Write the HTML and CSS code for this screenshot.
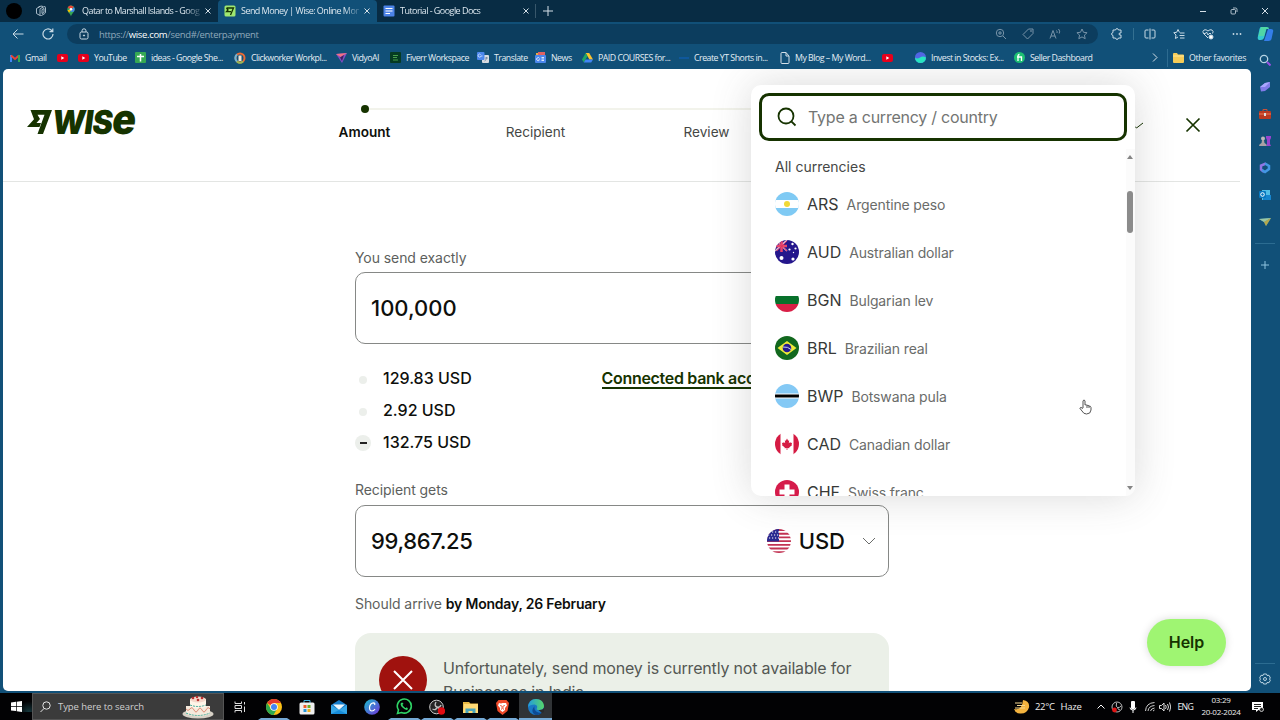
FILE: index.html
```html
<!DOCTYPE html>
<html lang="en">
<head>
  <meta charset="UTF-8">
  <meta name="viewport" content="width=device-width, initial-scale=1.0">
  <title>Send Money | Wise: Online Money Transfers</title>
  <link rel="stylesheet" href="styles.css">
</head>
<body>
  <!-- tabs -->
  <div class="tabs">
    <div class="tab tab-tools">
      <span class="avatar"></span>
      <svg class="workspaces" width="12" height="12" viewBox="0 0 12 12" fill="none" stroke="#b9cad6" stroke-width=".900"><path d="M1.500 3.500v5l3.500 2M3 2.500 5 1.200M5 4.500q0-1 1-1.300l3-1.500q1.500-.5 1.500 1v4.500q0 1-1 1.500L6.500 10.500Q5 11 5 9.700zM7 4.500v4l2-1v-4zM1.500 3.500 6 1l2 .5"/></svg>
    </div>
    <div class="tab">
      <svg width="12" height="12" viewBox="0 0 12 12"><path d="M6 .500a3.800 3.800 0 0 0-3.700 4C2.300 7 5.500 8.500 6 11.500 6.500 8.500 9.700 7 9.700 4.500A3.800 3.800 0 0 0 6 .500" fill="#34a853"/><path d="M6 .500a3.800 3.800 0 0 0-3.300 2L6 5l2.800-3.300z" fill="#ea4335"/><path d="M9 2 5 7l4-.600a4 4 0 0 0 0-4.400" fill="#4285f4"/><path d="M2.500 5 4 7.800 6 5z" fill="#fbbc04"/><circle cx="6" cy="4.300" r="1.300" fill="#fff"/></svg>
      <span class="tab-title">Qatar to Marshall Islands - Goog</span>
      <svg class="close" width="6" height="6" viewBox="0 0 6 6" stroke="#d5e0e8"><path d="M.5.5l5 5M5.500.5l-5 5"/></svg>
    </div>
    <div class="tab active">
      <svg width="12" height="12" viewBox="0 0 12 12"><rect x=".500" y=".500" width="11" height="11" rx="1.500" fill="#9fe870"/><path d="M2.500 3h7L6.500 10M2.500 3 4 5 2.500 6.700h4.500" stroke="#163300" stroke-width="1.300" fill="none"/></svg>
      <span class="tab-title">Send Money | Wise: Online Mone</span>
      <svg class="close" width="6" height="6" viewBox="0 0 6 6" stroke="#d5e0e8"><path d="M.5.5l5 5M5.500.5l-5 5"/></svg>
    </div>
    <div class="tab">
      <svg width="12" height="12" viewBox="0 0 12 12"><rect x=".500" y=".500" width="11" height="11" rx="1" fill="#4c83e8"/><path d="M2.500 3.500h7M2.500 6h7M2.500 8.500h4.500" stroke="#fff" stroke-width="1.200"/></svg>
      <span class="tab-title">Tutorial - Google Docs</span>
      <svg class="close" width="6" height="6" viewBox="0 0 6 6" stroke="#d5e0e8"><path d="M.5.5l5 5M5.500.5l-5 5"/></svg>
    </div>
    <svg class="new-tab" width="10" height="10" viewBox="0 0 10 10" stroke="#d5e0e8"><path d="M5 0v10M0 5h10"/></svg>
    <div class="window-buttons">
      <svg width="8" height="8" viewBox="0 0 8 8" stroke="#d5e0e8" fill="none"><path d="M1 4.500h6"/></svg>
      <svg width="8" height="8" viewBox="0 0 8 8" stroke="#d5e0e8" fill="none" stroke-width=".800"><rect x="1" y="2.500" width="4.500" height="4.500" rx="1"/><path d="M3 1h2.500Q7 1 7 2.500V5"/></svg>
      <svg width="8" height="8" viewBox="0 0 8 8" stroke="#d5e0e8" fill="none"><path d="M1 1l6 6M7 1 1 7"/></svg>
    </div>
  </div>

  <div class="browser">
    <div class="window">
      <!-- address bar -->
      <div class="toolbar">
        <svg class="back" width="12" height="10" viewBox="0 0 12 10" fill="none" stroke="#c9dae5"><path d="M11.500 5H1M5.500.5 1 5l4.500 4.500"/></svg>
        <svg class="reload" width="12" height="12" viewBox="0 0 12 12" fill="none" stroke="#c9dae5" stroke-width="1.200"><path d="M11 6a5 5 0 1 1-1.600-3.700L10.500 3.500M10.800.500v3.200H7.500"/></svg>
        <div class="address">
          <svg width="10" height="12" viewBox="0 0 10 12" fill="none" stroke="#c9dae5"><rect x="1" y="4" width="8" height="7" rx="1.500"/><path d="M3 4V2.800a2 2 0 0 1 4 0V4"/><circle cx="5" cy="7.500" r=".600" fill="#fff"/></svg>
          <span class="url">https://<b>wise.com</b>/send#/enterpayment</span>
          <div class="address-icons">
            <svg width="12" height="12" viewBox="0 0 12 12" fill="none" stroke="#7793a8"><circle cx="5" cy="5" r="3.700"/><path d="M8 8l3 3M3 5h4M5 3v4"/></svg>
            <svg width="12" height="12" viewBox="0 0 12 12" fill="none" stroke="#7793a8"><path d="M6.500 1H11v4.500L5.500 11 1 6.500z" stroke-linejoin="round"/><circle cx="9" cy="3" r=".500"/></svg>
            <svg width="12" height="12" viewBox="0 0 12 12" fill="none" stroke="#7793a8"><path d="M1 10.500 4 2.500l3 8M2 8h4M7.500 2.500q1 1 .5 2.500M9.500 1q2 2 .7 4.500"/></svg>
            <svg width="12" height="12" viewBox="0 0 12 12" fill="none" stroke="#7793a8"><path d="M6 1l1.500 3.300 3.600.4-2.700 2.400.8 3.600L6 8.900l-3.200 1.800.8-3.600L.9 4.700l3.600-.4z"/></svg>
          </div>
        </div>
        <div class="toolbar-icons">
          <svg width="12" height="12" viewBox="0 0 12 12" fill="none" stroke="#c9dae5"><path d="M2 2h2.500Q5 .500 6 .500T7.500 2H10v3H8.500Q7.500 6 8.500 7H10v3H7.500Q7 11.500 6 11.500T4.500 10H2V7.500Q.5 7 .5 6T2 4.500z"/></svg>
          <i class="separator"></i>
          <svg width="12" height="12" viewBox="0 0 12 12" fill="none" stroke="#c9dae5"><path d="M6 .500v11M4.500 2H2Q1 2 1 3v6q0 1 1 1h2.500M7.500 2H10q1 0 1 1v6q0 1-1 1H7.500"/></svg>
          <svg width="12" height="12" viewBox="0 0 12 12" fill="none" stroke="#c9dae5"><path d="M6.500 4.500 5 1.500 3.700 4.300.8 4.700 3 7l-.6 3.500L5 9M7 5h4.500M6.500 7.500h5M7 10h4.500"/></svg>
          <svg width="12" height="12" viewBox="0 0 12 12" fill="none" stroke="#c9dae5"><path d="M6 10 1.500 5.500Q0 3.500 2 2q2-1 4 1 2-2 4-1 2 1.500.5 3.500M1.500 5.500h2l1-1.500L6 7l1-1.500h2"/><circle cx="9" cy="9" r="2" fill="#fff"/></svg>
          <svg width="12" height="12" viewBox="0 0 12 12" fill="#c9dae5"><circle cx="2.500" cy="6" r=".900"/><circle cx="6" cy="6" r=".900"/><circle cx="9.500" cy="6" r=".900"/></svg>
        </div>
      </div>

      <!-- favorites -->
      <div class="favorites">
        <a><svg width="10" height="8" viewBox="0 0 10 8" fill="none" stroke-width="2"><path d="M1 8V1" stroke="#4285f4"/><path d="M1 1.500 5 5l4-3.500" stroke="#ea4335"/><path d="M9 8V1" stroke="#34a853"/></svg>Gmail</a>
        <a><svg width="11" height="8" viewBox="0 0 11 8"><rect width="11" height="8" rx="2" fill="#e6001c"/><path d="M4.300 2.200 7.300 4l-3 1.800z" fill="#fff"/></svg></a>
        <a><svg width="11" height="8" viewBox="0 0 11 8"><rect width="11" height="8" rx="2" fill="#e6001c"/><path d="M4.300 2.200 7.300 4l-3 1.800z" fill="#fff"/></svg>YouTube</a>
        <a><svg width="11" height="11" viewBox="0 0 11 11"><rect width="11" height="11" rx="1" fill="#35a853"/><path d="M5.500 2v7.500M2 4.500h7" stroke="#fff" stroke-width="1.500"/></svg>ideas - Google She...</a>
        <a><svg width="12" height="12" viewBox="0 0 12 12" fill="none" stroke-width="2"><circle cx="6" cy="6" r="4.500" stroke="#e96a33"/><path d="M3 9.500a4.500 4.500 0 0 1 0-7" stroke="#69b7dc"/><path d="M3 9.500q3 2.500 6 0" stroke="#95bb5a"/><path d="M6 3.500V9" stroke="#f3e5d5" stroke-width="3"/></svg>Clickworker Workpl...</a>
        <a><svg width="11" height="10" viewBox="0 0 11 10"><path d="M0 1 11 0 6 10z" fill="#824ec3"/><path d="M0 1 11 0 4.500 4z" fill="#f07085"/><path d="M4 4.500 8 2 6 8z" fill="#3d2065"/></svg>VidyoAI</a>
        <a><svg width="11" height="11" viewBox="0 0 11 11"><rect width="11" height="11" rx="1" fill="#063b22"/><path d="M3 3.500h5M3 5.500h4M3 8h5" stroke="#49a04b"/></svg>Fiverr Workspace</a>
        <a><svg width="12" height="11" viewBox="0 0 12 11"><rect x="5" y="3" width="7" height="8" rx="1" fill="#d7dce2"/><rect width="7.500" height="8" rx="1" fill="#4b87ed"/><path d="M5.500 4H4a1.500 1.500 0 1 1-.3-1.300" stroke="#dbe8ff" fill="none" stroke-width=".800"/><path d="M8 6h3M9.500 5v1q0 2-2 3" stroke="#6b7f99" fill="none" stroke-width=".800"/></svg>Translate</a>
        <a><svg width="11" height="11" viewBox="0 0 11 11"><path d="M1 1h8v3H1z" fill="#e9ad46"/><path d="M3 0h7v4H3z" fill="#dd6262"/><rect y="3" width="11" height="8" rx="1" fill="#4b87ed"/><path d="M4.500 6.500a1.500 1.500 0 1 0 0 1.200H3.500M6.500 5.500H9M6.500 7H9M6.500 8.500H9" stroke="#fff" fill="none" stroke-width=".800"/></svg>News</a>
        <a><svg width="11" height="10" viewBox="0 0 11 10"><path d="M3.700 0h3.500L11 6.500H7.400z" fill="#fbc32e"/><path d="M3.700 0 0 6.500l1.800 3L5.500 3.200z" fill="#21a565"/><path d="M3.600 6.500H11L9.200 9.500H1.800z" fill="#4285f4"/></svg>PAID COURSES for...</a>
        <a><svg width="10" height="4" viewBox="0 0 10 4"><path d="M0 2h10" stroke="#0f5ba8" stroke-width="1.500"/></svg>Create YT Shorts in...</a>
        <a><svg width="10" height="12" viewBox="0 0 10 12" fill="none" stroke="#d5e0e8"><path d="M1 1.500q0-1 1-1h4L9 4v6.500q0 1-1 1H2q-1 0-1-1zM6 .500V4h3"/></svg>My Blog – My Word...</a>
        <a><svg width="11" height="8" viewBox="0 0 11 8"><rect width="11" height="8" rx="2" fill="#e6001c"/><path d="M4.300 2.200 7.300 4l-3 1.800z" fill="#fff"/></svg></a>
        <a><svg width="11" height="11" viewBox="0 0 11 11"><circle cx="5.500" cy="5.500" r="5.500" fill="#5165e3"/><path d="M0 5.500q2 2 5 0t6 0a5.500 5.500 0 0 1-11 0" fill="#27e4c0"/></svg>Invest in Stocks: Ex...</a>
        <a><svg width="11" height="11" viewBox="0 0 11 11"><circle cx="5.500" cy="5.500" r="5.500" fill="#1dbf73"/><path d="M4 9V4q0-1.500 1.500-1.500M3 5h4.500v4" stroke="#fff" fill="none" stroke-width="1.300"/></svg>Seller Dashboard</a>
        <a><svg width="6" height="9" viewBox="0 0 6 9" fill="none" stroke="#d5e0e8"><path d="M1 .500l4 4-4 4"/></svg></a>
        <a class="folder"><svg width="11" height="10" viewBox="0 0 11 10"><path d="M0 1q0-1 1-1h3l1 1.500h5q1 0 1 1V9q0 1-1 1H1Q0 10 0 9z" fill="#f6cc58"/><path d="M0 3h11" stroke="#ffe697"/></svg>Other favorites</a>
      </div>

      <!-- wise page -->
      <div class="page">
        <div class="header">
          <div class="logo">
            <svg width="25" height="24" viewBox="0 0 25 24" fill="#163300"><path d="M3.500 0H25L16 24h-5.500L17.500 4.800h-7l2.500 4.300-3.500 4H14L12.500 17H0L7 9.200z"/></svg>
            <span class="wordmark">WIS<span>e</span></span>
          </div>
          <div class="steps">
            <div class="step current">Amount</div>
            <div class="step">Recipient</div>
            <div class="step">Review</div>
            <div class="step"></div>
          </div>
          <svg class="account-arrow" width="10" height="8" viewBox="0 0 10 8" fill="none" stroke="#163300"><path d="M1 4.500l1.500 1.500L9 1"/></svg>
          <svg class="close-page" width="16" height="16" viewBox="0 0 16 16" stroke="#163300" stroke-width="1.700"><path d="M1.500 1.500l13 13M14.500 1.500l-13 13"/></svg>
        </div>

        <div class="form">
          <div class="label">You send exactly</div>
          <div class="amount">100,000</div>
          <div class="fees">
            <div class="fee"><i class="bullet"></i><b>129.83 USD</b><a class="method">Connected bank account</a></div>
            <div class="fee"><i class="bullet"></i><b>2.92 USD</b></div>
            <div class="fee"><i class="bullet minus"></i><b>132.75 USD</b></div>
          </div>
          <div class="label">Recipient gets</div>
          <div class="amount recipient">
            <span class="value">99,867.25</span>
            <div class="currency">
              <svg class="flag" width="24" height="24" viewBox="0 0 24 24"><rect width="24" height="24" fill="#fff"/><path d="M0 1h24M0 4.700h24M0 8.400h24M0 12.100h24M0 15.800h24M0 19.500h24M0 23.200h24" stroke="#c23353" stroke-width="1.850"/><rect width="12" height="12.500" fill="#2a2a91"/><path d="M2 3h10M1 6h11M2 9h10" stroke="#fff" stroke-width="1.100" stroke-dasharray="1.200 1.800"/></svg>
              USD
              <svg class="arrow" width="14" height="8" viewBox="0 0 14 8" fill="none" stroke="#6a6c6a"><path d="M1 1l6 6 6-6"/></svg>
            </div>
          </div>
          <div class="arrival">Should arrive <b>by Monday, 26 February</b></div>
          <div class="alert">
            <svg width="48" height="48" viewBox="0 0 48 48"><circle cx="24" cy="24" r="24" fill="#a0120e"/><path d="M15 15l18 18M33 15 15 33" stroke="#fff" stroke-width="2"/></svg>
            <p>Unfortunately, send money is currently not available for Businesses in India.</p>
          </div>
        </div>

        <!-- currency menu -->
        <div class="menu">
          <div class="menu-list">
            <div class="search">
              <svg width="20" height="20" viewBox="0 0 20 20" fill="none" stroke="#163300" stroke-width="1.800"><circle cx="9" cy="9" r="7.500"/><path d="M14.300 14.300l4.200 4.200"/></svg>
              Type a currency / country
            </div>
            <div class="menu-title">All currencies</div>
            <div class="option"><svg class="flag" width="24" height="24" viewBox="0 0 24 24"><rect width="24" height="24" fill="#7fcaf4"/><rect y="8" width="24" height="8" fill="#fff"/><circle cx="12" cy="12" r="3" fill="#f1d936"/></svg><span>ARS</span><small>Argentine peso</small></div>
            <div class="option"><svg class="flag" width="24" height="24" viewBox="0 0 24 24"><rect width="24" height="24" fill="#24168c"/><path d="M0 0l12 11M12 0 0 11" stroke="#e9b5cc" stroke-width="1.500"/><path d="M0 6h12M6.500 0v12" stroke="#e9436b" stroke-width="2.500"/><path d="M1 1l11 10M12 1 2 11" stroke="#dc315d" stroke-width=".800"/><g fill="#fff"><circle cx="6.500" cy="18" r="2"/><circle cx="17.500" cy="4" r="1.200"/><circle cx="14.500" cy="9.500" r="1.100"/><circle cx="20.500" cy="8.500" r="1.100"/><circle cx="18" cy="19" r="1.600"/><circle cx="18.500" cy="12.500" r=".700"/></g></svg><span>AUD</span><small>Australian dollar</small></div>
            <div class="option"><svg class="flag" width="24" height="24" viewBox="0 0 24 24"><rect width="24" height="24" fill="#fff"/><rect y="8" width="24" height="8" fill="#08712b"/><rect y="16" width="24" height="8" fill="#d91f46"/></svg><span>BGN</span><small>Bulgarian lev</small></div>
            <div class="option"><svg class="flag" width="24" height="24" viewBox="0 0 24 24"><rect width="24" height="24" fill="#12681e"/><path d="M12 5l9.500 7L12 19l-9.500-7z" fill="#efea38"/><circle cx="12" cy="12" r="4.300" fill="#271990"/><path d="M8 11q5-.5 8 2.500" stroke="#c7d5ed" fill="none"/></svg><span>BRL</span><small>Brazilian real</small></div>
            <div class="option"><svg class="flag" width="24" height="24" viewBox="0 0 24 24"><rect width="24" height="24" fill="#84c9f5"/><rect y="9.500" width="24" height="5" fill="#fff"/><rect y="10.500" width="24" height="3" fill="#000"/></svg><span>BWP</span><small>Botswana pula</small></div>
            <div class="option"><svg class="flag" width="24" height="24" viewBox="0 0 24 24"><rect width="24" height="24" fill="#fff"/><path d="M0 0h5.500v24H0zM18.500 0H24v24h-5.500zM12 6.500l1.200 2.200 1-.5-.4 3 1.500-1.300.4 1.100 1.500-.2-.7 1.700.7.500-3 2.400.2.900-2-.3V18h-.800v-2l-2 .3.200-.9-3-2.400.7-.5-.7-1.700 1.500.2.4-1.100 1.500 1.300-.4-3 1 .5z" fill="#d51b43"/></svg><span>CAD</span><small>Canadian dollar</small></div>
            <div class="option"><svg class="flag" width="24" height="24" viewBox="0 0 24 24"><rect width="24" height="24" fill="#d51b4a"/><path d="M12 4.500v15M4.500 12h15" stroke="#fff" stroke-width="5"/></svg><span>CHF</span><small>Swiss franc</small></div>
          </div>
          <div class="scrollbar">
            <i class="up"></i><i class="thumb"></i><i class="down"></i>
          </div>
        </div>
        <svg class="pointer" width="13" height="16" viewBox="0 0 13 16" fill="#fff" stroke="#555" stroke-linejoin="round"><path d="M4 9V1.800Q5 0 6 1.800V6q1-.8 2 .4 1-.6 2 .6 1.500-.3 2 1.500V11q-.3 4-4.500 4Q4.500 15 3 12L.8 9.200Q1.500 7.500 4 9.500M8 6.500V9M10 7v2"/></svg>
        <div class="help">Help</div>
      </div>
    </div>

    <!-- edge sidebar -->
    <div class="sidebar">
      <svg class="copilot" width="17" height="16" viewBox="0 0 17 16"><path d="M4 1h6L7 12q-1 2-3 2H2Q0 13 1 10L2.500 3Q3 1 4 1" fill="#35c9d0"/><path d="M11 3h3q3 0 2 3l-1.500 7q-.5 2-3 2H7z" fill="#347ee9"/><path d="M4 1h6q2 0 2 2H9L7 10H1.500z" fill="#50d6a5"/></svg>
      <svg width="12" height="12" viewBox="0 0 12 12" fill="none"><circle cx="5" cy="5" r="3.700" stroke="#b5d3e4" stroke-width="1.300"/><path d="M8 8l3.500 3.500" stroke="#9950e5" stroke-width="2"/></svg>
      <svg width="12" height="12" viewBox="0 0 12 12"><path d="M1 6 6 2l5-1v5l-5 4-4 .500z" fill="#817be9"/><path d="M1 6l5-4 5-1-5 5z" fill="#aaa7ff"/></svg>
      <svg width="12" height="12" viewBox="0 0 12 12"><path d="M4 3V1.500h4V3" stroke="#c7513a" fill="none"/><rect y="3" width="12" height="8" rx="1" fill="#b93922"/><path d="M0 6h12" stroke="#ed7956"/><rect x="5" y="5" width="2" height="3" fill="#ddd"/></svg>
      <svg width="12" height="12" viewBox="0 0 12 12"><circle cx="4" cy="3.500" r="2" fill="#bdb6b9"/><path d="M0 11q0-2 2.500-3L3 5h2l.5 3Q8 9 8 11z" fill="#aaa0a5"/><path d="M7 1h5v2l-1 2v4l1 2H7.500l.5-2V5L7 3z" fill="#9744ce"/></svg>
      <svg width="12" height="12" viewBox="0 0 12 12" fill="none" stroke-width="2.500"><path d="M7 1.500 2 3.500v4L5 10" stroke="#9175e4"/><path d="M6 1.500 10 4v3L6 10 3 8" stroke="#4397e4"/></svg>
      <svg width="12" height="12" viewBox="0 0 12 12"><path d="M3 1h8v10H3z" fill="#50bee8"/><path d="M4 6h8v5H4z" fill="#1685ce"/><rect y="2" width="7" height="7" rx="1" fill="#0878bf"/><circle cx="3.500" cy="5.500" r="1.800" fill="none" stroke="#fff"/></svg>
      <svg width="12" height="12" viewBox="0 0 12 12"><path d="M0 3l12-1-5 8-2-4z" fill="#5299a0"/><path d="M0 3l12-1-7 4z" fill="#9bc7a5"/><path d="M5 6l7-4-5 8z" fill="#b5a84c"/></svg>
      <hr>
      <svg class="add" width="8" height="8" viewBox="0 0 8 8" stroke="#8fc3df"><path d="M4 0v8M0 4h8"/></svg>
      <hr class="bottom-line">
      <svg width="12" height="12" viewBox="0 0 12 12" fill="none" stroke="#b9d2e0"><path d="M4.500 1h3l.5 1.500 2-.2L11.400 5l-1 1 1 1.200L10 9.700l-2-.200L7.500 11h-3L4 9.500l-2 .2L.6 7.200 1.600 6l-1-1L2 2.300l2 .2z"/><circle cx="6" cy="6" r="1.500"/></svg>
    </div>
  </div>

  <!-- windows taskbar -->
  <div class="taskbar">
    <div class="start"><svg width="11" height="11" viewBox="0 0 11 11" fill="#fff"><path d="M0 1.500 5 .800V5H0zM5.700.700 11 0v5H5.700zM0 5.700h5v4.400l-5-.700zM5.700 5.700H11V11l-5.300-.800z"/></svg></div>
    <div class="task-search">
      <svg width="11" height="11" viewBox="0 0 11 11" fill="none" stroke="#e5e5e5"><circle cx="6.500" cy="4.500" r="3.700"/><path d="M4 7.500.500 11"/></svg>
      <span>Type here to search</span>
      <svg class="cake" width="32" height="24" viewBox="0 0 32 24"><ellipse cx="16" cy="19" rx="15.500" ry="4.500" fill="#d7d1c6"/><path d="M4 11h24v8q-12 5-24 0z" fill="#f5eadc"/><path d="M8 4h16v8q-8 3-16 0z" fill="#fff5e8"/><ellipse cx="16" cy="4.500" rx="8" ry="3" fill="#f5d7ca"/><path d="M4 14q2 3 4 0t4 1 4 0 4 0 4 0 4-1" stroke="#de8e79" fill="none"/><path d="M4 18q12 5 24 0M8 10q8 3 16 0" stroke="#43aa98" fill="none" stroke-dasharray="2 1"/><g fill="#ba3030"><circle cx="11" cy="3" r="1.300"/><circle cx="16" cy="5" r="1.300"/><circle cx="20" cy="3" r="1.300"/><circle cx="15" cy="2" r="1.200"/></g></svg>
    </div>
    <div class="apps">
      <div class="app view"><svg width="12" height="12" viewBox="0 0 12 12" fill="none" stroke="#ddd"><path d="M1 .500v2h6.500v-2M1 11.500v-2h6.500v2M1 4.500h6.500v3H1zM10.500 1v2.500M10.500 5.500V11"/></svg></div>
      <div class="app open"><svg width="16" height="16" viewBox="0 0 16 16"><circle cx="8" cy="8" r="8" fill="#fbc116"/><path d="M8 8 1.100 4A8 8 0 0 1 15 4H8z" fill="#e33b2e"/><path d="M8 8 5 10 1.100 4A8 8 0 0 0 7.500 16l3.500-6z" fill="#2da94f"/><circle cx="8" cy="8" r="3.800" fill="#fff"/><circle cx="8" cy="8" r="3" fill="#4285f4"/></svg></div>
      <div class="app"><svg width="16" height="16" viewBox="0 0 16 16"><path d="M5 4V1.500h6V4" stroke="#42b3df" fill="none"/><rect x=".500" y="3.500" width="15" height="12" rx="1.500" fill="#eee"/><path d="M4.500 6h3v3h-3z" fill="#ec5a2c"/><path d="M8.500 6h3v3h-3z" fill="#6cad28"/><path d="M4.500 10h3v3h-3z" fill="#2495d8"/><path d="M8.500 10h3v3h-3z" fill="#e9ae20"/></svg></div>
      <div class="app"><svg width="16" height="16" viewBox="0 0 16 16"><path d="M0 6l8-5 8 5v9H0z" fill="#147bc9"/><path d="M2 5.500h12L8 11z" fill="#eff8fd"/><path d="M0 6l8 5 8-5v9H0z" fill="#36a6e6"/><path d="M8 11l8 4H0z" fill="#168bd8"/></svg></div>
      <div class="app"><svg width="16" height="16" viewBox="0 0 16 16"><defs><linearGradient id="cg" x2="1" y2="1"><stop stop-color="#19bdcb"/><stop offset="1" stop-color="#7432dc"/></linearGradient></defs><circle cx="8" cy="8" r="7.800" fill="url(#cg)"/><path d="M10.500 6q1-2-1-2.200Q6 4 5.500 8.500 5.500 12 8 12q1.800 0 3-2" stroke="#fff" fill="none" stroke-width="1.200"/></svg></div>
      <div class="app open"><svg width="17" height="17" viewBox="0 0 17 17" fill="none" stroke="#2fd466" stroke-width="1.600"><path d="M1.500 15.500l1-3.500A7 7 0 1 1 5.500 14.500z"/><path d="M6 5q-1.500 1.500 1 4t4.500 2M6 5l.8 1.500M11.500 11l-1.500-1"/></svg></div>
      <div class="app open"><svg width="16" height="16" viewBox="0 0 16 16" fill="none"><circle cx="7.500" cy="8" r="6.800" stroke="#ccc" fill="#242424"/><path d="M7 3q-2 4 1 5t4-2M8 8q-1 4-4.500 2M8 8q3 1 3 4" stroke="#bbb" stroke-width="1.400"/><circle cx="12.500" cy="12" r="3.700" fill="#e20b12"/></svg></div>
      <div class="app open"><svg width="15" height="14" viewBox="0 0 15 14"><path d="M0 2h6l1.500 1.500H15V13H0z" fill="#e9b944"/><path d="M1 4h14v9H0z" fill="#ffda75"/><path d="M2.500 13V8.500h10V13h-3v-2h-4v2z" fill="#4aa5bc"/></svg></div>
      <div class="app open"><svg width="15" height="16" viewBox="0 0 15 16"><path d="M3.500 1h8l2.500 3-1.500 8-5 4-5-4L1 4z" fill="#ef4a2a"/><path d="M4 4l2 .5L7.500 4 11 4l1 2.500-2 2.500v2l-2.500 2L5 11V9L3 6.500z" fill="#fff"/><path d="M5 6.500 7 7v3l-1 .500M10 6.500 8 7v3l1 .500" stroke="#ef4a2a" fill="none" stroke-width=".800"/></svg></div>
      <div class="app open selected"><svg width="16" height="16" viewBox="0 0 16 16"><defs><linearGradient id="eg" x2="1"><stop stop-color="#229bdf"/><stop offset="1" stop-color="#58d767"/></linearGradient></defs><circle cx="8" cy="8" r="8" fill="#1a78c5"/><path d="M0 8Q1 0 8 0t8 7q-.5 4-4.500 4T9 9q1-3-2.500-3.500Q2 5.500 0 8" fill="url(#eg)"/><path d="M6.500 7q-1 5 4 6.500 2 .5 4-.500-3 4-7.500 2.700Q2 13 6.500 7" fill="#0e4a94"/><path d="M10.500 11q4 .5 5.500-2v4l-2 1z" fill="#2b2b2b"/></svg></div>
    </div>
    <div class="tray">
      <svg class="weather" width="16" height="14" viewBox="0 0 16 14"><path d="M9 0q7 1 6 7.500Q13 14 6 13.500 1 13 0 9q8 2 9-9" fill="#f3b33f"/><path d="M1 3h7M3 5.500h8M1 8h10" stroke="#f5d791"/></svg>
      <span class="temp">22°C</span><span class="haze">Haze</span>
      <svg class="up-arrow" width="8" height="5" viewBox="0 0 8 5" fill="none" stroke="#fff"><path d="M.500 4.500 4 1l3.500 3.500"/></svg>
      <svg class="obs" width="12" height="12" viewBox="0 0 12 12" fill="none"><circle cx="6" cy="6" r="5" stroke="#bbb"/><path d="M5.500 2q-1 4 1 4.500T10 5M6.500 6.500Q7 9 9 9" stroke="#bbb"/><circle cx="3.500" cy="9" r="2.400" fill="#df1515"/></svg>
      <svg class="mic" width="8" height="12" viewBox="0 0 8 12" fill="#fff"><rect x="2" width="4" height="8" rx="1"/><path d="M1 6.500Q1 9 4 9t3-2.500M4 9v3" stroke="#fff" fill="none"/></svg>
      <svg class="wifi" width="10" height="10" viewBox="0 0 10 10" fill="none" stroke="#ccc"><path d="M.500 9Q1 1 9.500.500M3 9Q3.500 4 9.500 3.500M5.500 9q.5-2.500 4-3M8 9l1.500-1"/></svg>
      <svg class="volume" width="12" height="10" viewBox="0 0 12 10" fill="none" stroke="#ddd"><path d="M.500 3.500h2L5 1v8L2.500 6.500h-2zM6.500 3q1.500 2 0 4M8.500 2q2 3 0 6M10.500.500q2.500 4.500 0 9"/></svg>
      <span class="lang">ENG</span>
      <div class="clock">03:29<br>20-02-2024</div>
      <svg class="notes" width="12" height="12" viewBox="0 0 12 12"><path d="M0 1h11v8H6.500L4 11V9H0z" fill="#fff"/><path d="M2 3.500h7M2 5.500h7M2 7.500h4" stroke="#222"/><circle cx="9.500" cy="8.500" r="2" fill="#222" stroke="#fff" stroke-width=".700"/></svg>
    </div>
  </div>
</body>
</html>
```
FILE: styles.css
```css
* {
  box-sizing: border-box;
}

body {
  margin: 0;
  width: 1280px;
  height: 720px;
  overflow: hidden;
  background: #115078;
  font-family: Inter, "Open Sans", sans-serif;
  color: #0e0f0c;
}

svg {
  display: block;
  flex-shrink: 0;
}

/* tabs */
.tabs {
  display: flex;
  align-items: center;
  height: 22px;
  background: #082c44;
  color: #dce7ef;
  font: 9px/20px "Open Sans", sans-serif;
  letter-spacing: -.55px;
}

.tab {
  display: flex;
  align-items: center;
  width: 159px;
  height: 22px;
  padding-left: 6px;
}

.tab-tools {
  width: 59px;
}

.tab.active {
  background: #115078;
  border-radius: 4px 4px 0 0;
}

.tab:nth-child(4) {
  border-right: 1px solid #38576b;
  height: 14px;
}

.avatar {
  width: 16px;
  height: 16px;
  border-radius: 50%;
  background: #000;
}

.workspaces {
  margin-left: 13px;
}

.tab-title {
  width: 118px;
  margin-left: 5px;
  white-space: nowrap;
  -webkit-mask-image: linear-gradient(90deg, #000 87%, rgba(0, 0, 0, .2));
}

.tab .close {
  margin-left: 5px;
}

.new-tab {
  margin-left: 7px;
}

.window-buttons {
  display: flex;
  gap: 23px;
  margin-left: auto;
  padding-right: 11px;
}

.browser {
  display: flex;
  height: 671px;
}

.window {
  width: 1251px;
  padding-left: 3px;
}

/* address bar */
.toolbar {
  display: flex;
  align-items: center;
  height: 24px;
  width: 1248px;
}

.back {
  margin-left: 9px;
}

.reload {
  margin-left: 18px;
}

.address {
  display: flex;
  align-items: center;
  width: 1031px;
  height: 20px;
  margin-left: 13px;
  padding: 0 10px 0 12px;
  border-radius: 10px;
  background: #0c3d5e;
}

.url {
  margin-left: 10px;
  color: #8fa9bb;
  font: 9.5px "Open Sans", sans-serif;
  letter-spacing: -.33px;
}

.url b {
  color: #fff;
  font-weight: 400;
}

.address-icons {
  display: flex;
  gap: 15px;
  margin-left: auto;
}

.toolbar-icons {
  display: flex;
  align-items: center;
  gap: 18px;
  margin-left: 13px;
}

.separator {
  width: 1px;
  height: 12px;
  margin: 0 -8px;
  background: #347091;
}

.toolbar-icons svg:nth-child(n+4) {
  margin-left: -1px;
}

/* favorites */
.favorites {
  display: grid;
  grid-template-columns: 47px 21px 57px 99px 102px 54px 87px 58px 47px 97px 101px 102px 33px 99px 137px 20px 90px;
  align-items: center;
  height: 23px;
  width: 1251px;
  padding-left: 7px;
  color: #e3edf4;
  font: 8.8px/18px "Open Sans", sans-serif;
  letter-spacing: -.5px;
}

.favorites a {
  display: flex;
  align-items: center;
  gap: 5px;
  white-space: nowrap;
}

.favorites a:nth-child(16) {
  margin-left: 1px;
}

.favorites .folder {
  border-left: 1px solid #2d6b90;
  margin-left: -4px;
  padding-left: 5px;
  letter-spacing: -.32px;
}

/* wise page */
.page {
  position: relative;
  width: 1248px;
  height: 622px;
  overflow: hidden;
  border-radius: 5px;
  background: #fff;
}

.header {
  display: flex;
  align-items: flex-start;
  width: 1237px;
  height: 113px;
  border-bottom: 1px solid #e3e5e3;
}

.logo {
  display: flex;
  width: 276px;
  height: 40px;
  padding: 41px 0 0 24px;
}

.wordmark {
  height: 24px;
  margin-left: -1px;
  color: #163300;
  font-size: 33px;
  font-weight: 900;
  line-height: 24px;
  transform: scaleX(.93) skewX(-8deg);
  transform-origin: 0 100%;
  letter-spacing: -1px;
}

.wordmark span {
  font-size: 42px;
  line-height: 0;
}

.steps {
  display: flex;
  padding-top: 39px;
}

.step {
  width: 171px;
  border-top: 2px solid #f2f3eb;
  padding-top: 13px;
  color: #454745;
  font-size: 13.600px;
  line-height: 18px;
  text-align: center;
}

.step.current {
  color: #0e0f0c;
  font-weight: 600;
  border-image: linear-gradient(90deg, transparent 50%, #f2f3eb 50%) 2;
}

.step.current::before {
  content: "";
  display: block;
  width: 8px;
  height: 8px;
  margin: -18px auto 10px;
  border-radius: 50%;
  background: #163300;
}

.account-arrow {
  margin: 53px 0 0 171px;
}

.close-page {
  margin: 48px 0 0 41px;
}

.form {
  width: 534px;
  margin: 65px 0 0 352px;
}

.label,
.arrival {
  color: #5d5f5d;
  font-size: 14px;
  line-height: 22px;
  letter-spacing: -.07px;
}

.amount {
  display: flex;
  align-items: center;
  height: 72px;
  margin-top: 3px;
  padding: 0 12px 1px 15px;
  border: 1px solid #868886;
  border-radius: 10px;
  font-size: 22px;
  font-weight: 500;
}

.amount.recipient {
  margin-top: 4px;
}

.value {
  letter-spacing: -.35px;
}

.currency {
  display: flex;
  align-items: center;
  gap: 8px;
  margin-left: auto;
}

.currency .arrow {
  margin-left: 9px;
}

.flag {
  border-radius: 50%;
}

.fees {
  margin: 18px 0 21px;
}

.fee {
  display: flex;
  align-items: center;
  height: 32px;
  font-size: 16px;
  white-space: nowrap;
}

.fee b {
  width: 218.500px;
  font-weight: 500;
}

.bullet {
  width: 8px;
  height: 8px;
  margin: 3px 16px 0 4px;
  border-radius: 50%;
  background: #ecefeb;
}

.bullet.minus {
  display: flex;
  align-items: center;
  justify-content: center;
  width: 16px;
  height: 16px;
  margin: 2px 12px 0 0;
}

.minus::before {
  content: "";
  width: 7px;
  height: 2px;
  background: #222;
}

.method {
  margin-top: 2px;
  color: #163300;
  font-weight: 600;
  line-height: 18px;
  letter-spacing: -.3px;
  border-bottom: 2px solid #163300;
}

.arrival {
  margin-top: 16px;
}

.arrival b {
  color: #0e0f0c;
  font-weight: 600;
  letter-spacing: -.2px;
}

.alert {
  display: flex;
  gap: 16px;
  height: 120px;
  margin-top: 18px;
  padding: 23px 24px;
  border-radius: 16px;
  background: #ebf0e8;
  color: #545854;
  font-size: 16px;
  line-height: 24px;
  letter-spacing: -.18px;
}

.alert p {
  margin: 0;
}

/* currency menu, opens over the form */
.menu {
  position: absolute;
  top: 16px;
  left: 748px;
  width: 384px;
  height: 411px;
  border-radius: 10px;
  background: #fff;
  box-shadow: 0 0 40px rgba(69, 71, 69, .2);
}

.menu-list {
  height: 411px;
  padding: 8px;
  overflow: hidden;
}

.search {
  display: flex;
  align-items: center;
  gap: 11px;
  height: 48px;
  width: 368px;
  padding-left: 15px;
  border: 3px solid #163300;
  border-radius: 10px;
  color: #737573;
  font-size: 16px;
  letter-spacing: -.24px;
}

.menu-title {
  height: 24px;
  margin: 14px 16px 1px;
  color: #454745;
  font-size: 14px;
  line-height: 24px;
}

.option {
  display: flex;
  align-items: center;
  height: 48px;
  padding-left: 16px;
}

.option span {
  margin: 0 8px;
  color: #373937;
  font-size: 16px;
}

.option small {
  color: #6a6c6a;
  font-size: 14px;
  letter-spacing: -.13px;
}

.scrollbar {
  position: absolute;
  top: 64px;
  right: 0;
  width: 9px;
  height: 347px;
  border-radius: 0 0 10px 0;
  background: #fbfbfb;
}

.scrollbar i {
  display: block;
  width: 0;
  margin: 6px 0 0 1px;
  border: 3.500px solid transparent;
  border-top: 0;
  border-bottom: 4px solid #858585;
}

.scrollbar .thumb {
  width: 6px;
  height: 42px;
  margin-top: 32px;
  border: 0;
  border-radius: 3px;
  background: #8b8b8b;
}

.scrollbar .down {
  margin-top: 253px;
  border-top: 4px solid #858585;
  border-bottom: 0;
}

.pointer {
  position: absolute;
  left: 1076px;
  top: 330px;
}

.help {
  position: absolute;
  left: 1144px;
  top: 550px;
  width: 79px;
  height: 47px;
  border-radius: 24px;
  background: #9ff572;
  box-shadow: 0 0 8px rgba(0, 0, 0, .15);
  color: #163300;
  font-size: 16px;
  font-weight: 600;
  line-height: 47px;
  text-align: center;
}

/* edge sidebar */
.sidebar {
  display: flex;
  flex-direction: column;
  align-items: center;
  width: 28px;
  gap: 15px;
}

.sidebar .copilot {
  margin: 4px 0 -3px;
}

.sidebar hr {
  width: 20px;
  margin: 0;
  border: 0;
  border-top: 1px solid #2c6c91;
}

.sidebar .add {
  margin-top: 2px;
}

.sidebar .bottom-line {
  margin-top: auto;
  margin-bottom: -6px;
}

.sidebar > svg:last-child {
  margin-bottom: 8px;
}

/* taskbar */
.taskbar {
  display: flex;
  align-items: center;
  height: 27px;
  background: #020204;
  color: #eee;
  font: 9.5px "Open Sans", sans-serif;
}

.start {
  display: flex;
  justify-content: center;
  width: 32px;
  background: radial-gradient(circle at 90% 100%, #15373c, transparent 35%);
}

.task-search {
  display: flex;
  align-items: center;
  width: 192px;
  height: 27px;
  padding-left: 7px;
  border: 1px solid #555;
  background: #3b3b3b;
  color: #cfcfcf;
}

.task-search span {
  margin-left: 7px;
  letter-spacing: -.08px;
}

.task-search .cake {
  margin: 0 9px 0 auto;
}

.apps {
  display: flex;
  height: 27px;
}

.app {
  display: flex;
  align-items: center;
  justify-content: center;
  width: 32.700px;
  border-left: 3px solid #020204;
  border-right: 3px solid #020204;
}

.app:nth-child(2) {
  margin-left: 1px;
}

.app.open {
  border-bottom: 2px solid #75a9d5;
  padding-top: 2px;
}

.app.selected {
  background: #303336;
  border-left: 0;
  border-right: 0;
}

.tray {
  display: flex;
  align-items: center;
  margin-left: auto;
  padding-right: 16px;
  letter-spacing: -.3px;
}

.temp {
  margin-left: 5px;
}

.haze {
  margin: 0 16px 0 6px;
}

.obs {
  margin-left: 6px;
}

.mic {
  margin-left: 6px;
}

.wifi {
  margin-left: 8px;
}

.volume {
  margin-left: 4px;
}

.lang {
  margin-left: 6px;
  font-size: 8.800px;
  letter-spacing: -.8px;
}

.clock {
  width: 40px;
  margin: -2px 11px 0 8px;
  font-size: 8px;
  line-height: 12px;
  letter-spacing: -.25px;
  text-align: center;
  white-space: nowrap;
}
```
